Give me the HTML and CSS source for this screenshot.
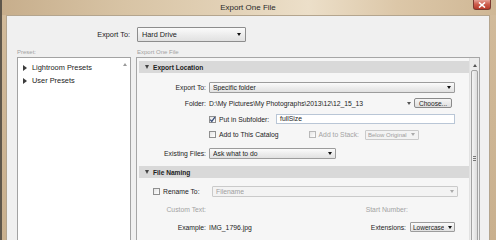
FILE: index.html
```html
<!DOCTYPE html>
<html>
<head>
<meta charset="utf-8">
<link rel="stylesheet" href="styles.css">
</head>
<body>
<div class="win">
  <div class="titlebar">
    <span class="title">Export One File</span>
    <span class="close"><svg width="8" height="6" viewBox="0 0 8 6"><path d="M1 0.5 L7 5.5 M7 0.5 L1 5.5" stroke="#fff" stroke-width="1.6"/></svg></span>
  </div>
  <div class="frame">
    <div class="client">
      <div class="top-row">
        <div class="top-label">Export To:</div>
        <div class="select big"><span>Hard Drive</span><i class="arr"></i></div>
      </div>
      <div class="cols">
        <div class="left">
          <div class="caption">Preset:</div>
          <div class="listbox">
            <div class="items">
              <div class="tree-item"><i class="tri"></i>Lightroom Presets</div>
              <div class="tree-item"><i class="tri"></i>User Presets</div>
            </div>
            <div class="mini-scroll"><i class="up"></i></div>
          </div>
        </div>
        <div class="right">
          <div class="caption pad">Export One File</div>
          <div class="panel">
            <div class="panel-body">
              <div class="hdr"><i class="down"></i>Export Location</div>
              <div class="sec sec1">
                <div class="row">
                  <div class="lbl">Export To:</div>
                  <div class="ctl"><div class="select full"><span>Specific folder</span><i class="arr"></i></div></div>
                </div>
                <div class="row">
                  <div class="lbl">Folder:</div>
                  <div class="ctl folder">
                    <span class="path">D:\My Pictures\My Photographs\2013\12\12_15_13</span>
                    <i class="arr small"></i>
                    <div class="btn">Choose...</div>
                  </div>
                </div>
                <div class="row">
                  <div class="lbl"></div>
                  <div class="ctl">
                    <span class="cb checked"><svg width="7" height="7" viewBox="0 0 7 7"><path d="M1.2 3.6 L2.8 5.4 L5.9 1.2" fill="none" stroke="#3a4f7a" stroke-width="1.3"/></svg></span>
                    <span class="cbl">Put in Subfolder:</span>
                    <div class="input">fullSize</div>
                  </div>
                </div>
                <div class="row r4">
                  <div class="lbl"></div>
                  <div class="ctl">
                    <span class="cb"></span>
                    <span class="cbl">Add to This Catalog</span>
                    <span class="cb dis stack"></span>
                    <span class="cbl gray">Add to Stack:</span>
                    <div class="select dis below"><span>Below Original</span><i class="arr"></i></div>
                  </div>
                </div>
                <div class="row r5">
                  <div class="lbl">Existing Files:</div>
                  <div class="ctl"><div class="select ask"><span>Ask what to do</span><i class="arr"></i></div></div>
                </div>
              </div>
              <div class="hdr"><i class="down"></i>File Naming</div>
              <div class="sec sec2">
                <div class="row">
                  <div class="rename">
                    <span class="cb"></span>
                    <span class="cbl">Rename To:</span>
                  </div>
                  <div class="ctl"><div class="select full dis"><span>Filename</span><i class="arr"></i></div></div>
                </div>
                <div class="row">
                  <div class="lbl gray">Custom Text:</div>
                  <div class="ctl"><span class="rlbl gray">Start Number:</span></div>
                </div>
                <div class="row">
                  <div class="lbl">Example:</div>
                  <div class="ctl">
                    <span class="val">IMG_1796.jpg</span>
                    <span class="extl">Extensions:</span>
                    <div class="select lower"><span>Lowercase</span><i class="arr"></i></div>
                  </div>
                </div>
              </div>
              <div class="hdr last"></div>
            </div>
            <div class="vscroll">
              <div class="sbtn"><i class="up dark"></i></div>
              <div class="thumb"><div class="grip"></div></div>
            </div>
          </div>
        </div>
      </div>
    </div>
  </div>
</div>
</body>
</html>
```
FILE: styles.css
```css
* { box-sizing: border-box; margin: 0; padding: 0; }
html, body { width: 496px; height: 240px; overflow: hidden; }
body {
  font-family: "Liberation Sans", Arial, sans-serif;
  color: #1c1c1c;
  background: #c9b292;
}
.win {
  width: 496px;
  height: 240px;
  overflow: hidden;
  display: flex;
  flex-direction: column;
  background: linear-gradient(180deg, #d2bb9b, #c9b08e);
  border-left: 2px solid #5f574b;
}
.titlebar {
  height: 15px;
  flex: none;
  display: flex;
  align-items: center;
  justify-content: center;
  position: relative;
  background: linear-gradient(90deg, #c7ae8c 0%, #d8c4a5 25%, #e2d1b6 45%, #ecdfc9 62%, #dcc7a8 80%, #cfb795 100%);
}
.title {
  font-size: 8px;
  color: #2a2a2a;
  margin-left: -2px;
}
.close {
  position: absolute;
  right: 5px;
  top: 0;
  width: 18px;
  height: 10px;
  border-radius: 0 0 3px 3px;
  background: linear-gradient(180deg, #e6a196 0%, #cf5f4f 45%, #b8392a 100%);
  border: 1px solid #7c3a30;
  border-top: none;
  display: flex;
  align-items: center;
  justify-content: center;
}
.frame {
  flex: 1;
  min-height: 0;
  padding: 0 6px 0 4px;
  display: flex;
}
.client {
  flex: 1;
  min-height: 0;
  overflow: hidden;
  background: #f0f0f0;
  border: 1px solid #b4a58e;
  border-bottom: none;
  padding: 11px 9px 0 10px;
  display: flex;
  flex-direction: column;
}
.top-row {
  display: flex;
  align-items: center;
  height: 15px;
  flex: none;
  margin-left: -10px;
}
.top-label {
  width: 124px;
  text-align: right;
  font-size: 7.3px;
  padding-right: 1px;
  color: #222;
}
.select {
  display: flex;
  align-items: center;
  justify-content: space-between;
  background: linear-gradient(180deg, #fbfbfb 0%, #ececec 55%, #e1e1e1 100%);
  border: 1px solid #9c9c9c;
  border-radius: 1px;
  height: 11px;
  font-size: 6.8px;
  padding: 0 3px 0 3px;
  color: #1c1c1c;
  white-space: nowrap;
  overflow: hidden;
  flex: none;
}
.select span { overflow: hidden; }
.select.big {
  margin-left: 6px;
  width: 109px;
  height: 15px;
  font-size: 7.3px;
  padding: 0 4px 0 4px;
  border-color: #8d8d8d;
}
.arr {
  width: 0;
  height: 0;
  flex: none;
  border-left: 2px solid transparent;
  border-right: 2px solid transparent;
  border-top: 3px solid #111;
}
.arr.small { border-top-color: #555; margin: 0 3px 0 3px; }
.select.dis {
  color: #a0a0a0;
  background: #f3f3f3;
  border-color: #cacaca;
}
.select.dis .arr { border-top-color: #aaa; }
.cols {
  flex: 1;
  min-height: 0;
  display: flex;
  gap: 5px;
  margin-top: 5px;
}
.caption {
  height: 10px;
  flex: none;
  font-size: 6px;
  line-height: 10px;
  color: #a2a2a2;
}
.caption.pad { padding-left: 1px; }
.left {
  width: 114px;
  display: flex;
  flex-direction: column;
}
.listbox {
  flex: 1;
  min-height: 0;
  background: #fff;
  border: 1px solid #a3a3a3;
  border-bottom: none;
  display: flex;
}
.items {
  flex: 1;
  padding: 3px 0 0 5px;
}
.tree-item {
  height: 13px;
  display: flex;
  align-items: center;
  font-size: 7.4px;
  color: #222;
}
.tri {
  width: 0;
  height: 0;
  border-left: 4px solid #3c3c3c;
  border-top: 3px solid transparent;
  border-bottom: 3px solid transparent;
  margin-right: 5px;
}
.mini-scroll {
  width: 10px;
  padding-top: 5px;
  display: flex;
  justify-content: center;
}
.up {
  width: 0;
  height: 0;
  border-left: 2px solid transparent;
  border-right: 2px solid transparent;
  border-bottom: 3px solid #9a9a9a;
}
.up.dark { border-bottom-color: #555; }
.right {
  flex: 1;
  min-height: 0;
  display: flex;
  flex-direction: column;
}
.panel {
  flex: 1;
  min-height: 0;
  border: 1px solid #a6a6a6;
  border-bottom: none;
  background: #f6f6f6;
  display: flex;
}
.panel-body {
  flex: 1;
  min-height: 0;
  overflow: hidden;
  padding: 3px 0 0 2px;
  display: flex;
  flex-direction: column;
}
.hdr {
  height: 12px;
  flex: none;
  background: #d9d9d9;
  display: flex;
  align-items: center;
  padding-left: 6px;
  font-size: 6.6px;
  font-weight: bold;
  color: #222;
}
.down {
  width: 0;
  height: 0;
  border-left: 2px solid transparent;
  border-right: 2px solid transparent;
  border-top: 4px solid #444;
  margin-right: 4px;
}
.hdr.last { margin-top: 4px; height: 2px; }
.sec { font-size: 6.8px; flex: none; }
.sec1 { padding: 6px 0 5px 0; }
.sec2 { padding: 4px 0 0 0; }
.sec2 .row { height: 18px; }
.row {
  display: flex;
  align-items: center;
  height: 16px;
}
.row.r4 { height: 15px; }
.row.r5 { margin-top: 3px; }
.lbl {
  width: 67px;
  text-align: right;
  flex: none;
}
.ctl {
  margin-left: 3px;
  width: 246px;
  display: flex;
  align-items: center;
}
.select.full { width: 246px; }
.folder { padding-right: 3px; }
.path { flex: 1; white-space: nowrap; }
.btn {
  width: 38px;
  height: 10px;
  border: 1px solid #8a8a8a;
  border-radius: 2px;
  background: linear-gradient(180deg, #f6f6f6, #dedede);
  font-size: 6.6px;
  display: flex;
  align-items: center;
  justify-content: center;
}
.cb {
  width: 7px;
  height: 7px;
  flex: none;
  border: 1px solid #8f8f8f;
  background: linear-gradient(135deg, #e4e4e4, #ffffff);
  display: flex;
  align-items: center;
  justify-content: center;
}
.cb svg { flex: none; }
.cb.dis { border-color: #b8b8b8; }
.cbl { margin-left: 3px; white-space: nowrap; }
.gray { color: #a3a3a3; }
.input {
  margin-left: auto;
  width: 179px;
  height: 10px;
  background: #fff;
  border: 1px solid #b9c6d6;
  padding-left: 3px;
  line-height: 8px;
}
.stack { margin-left: 30px; }
.select.below { margin-left: 6px; width: 54px; height: 10px; font-size: 6px; padding: 0 3px 0 2px; }
.select.below .arr { margin-left: 3px; }
.select.ask { width: 127px; }
.rename {
  width: 70px;
  display: flex;
  align-items: center;
  padding-left: 14px;
}
.rlbl { margin-left: auto; margin-right: 47px; }
.val { white-space: nowrap; }
.extl { margin-left: auto; margin-right: 4px; }
.select.lower { width: 45px; height: 10px; padding: 0 2px 0 2px; font-size: 6.5px; }
.vscroll {
  width: 10px;
  flex: none;
  border-left: 1px solid #e2e2e2;
  background: #ececec;
  display: flex;
  flex-direction: column;
  align-items: center;
  overflow: hidden;
}
.sbtn {
  height: 12px;
  flex: none;
  width: 100%;
  display: flex;
  align-items: center;
  justify-content: center;
  padding-top: 2px;
}
.thumb {
  width: 7px;
  flex: 1;
  margin-bottom: -4px;
  border: 1px solid #a2a2a2;
  border-radius: 2px;
  background: linear-gradient(90deg, #f4f4f4, #dcdcdc);
  display: flex;
  justify-content: center;
}
.grip {
  margin-top: 85px;
  width: 3px;
  height: 5px;
  background: repeating-linear-gradient(180deg, #777 0 1px, transparent 1px 2px);
}
```
